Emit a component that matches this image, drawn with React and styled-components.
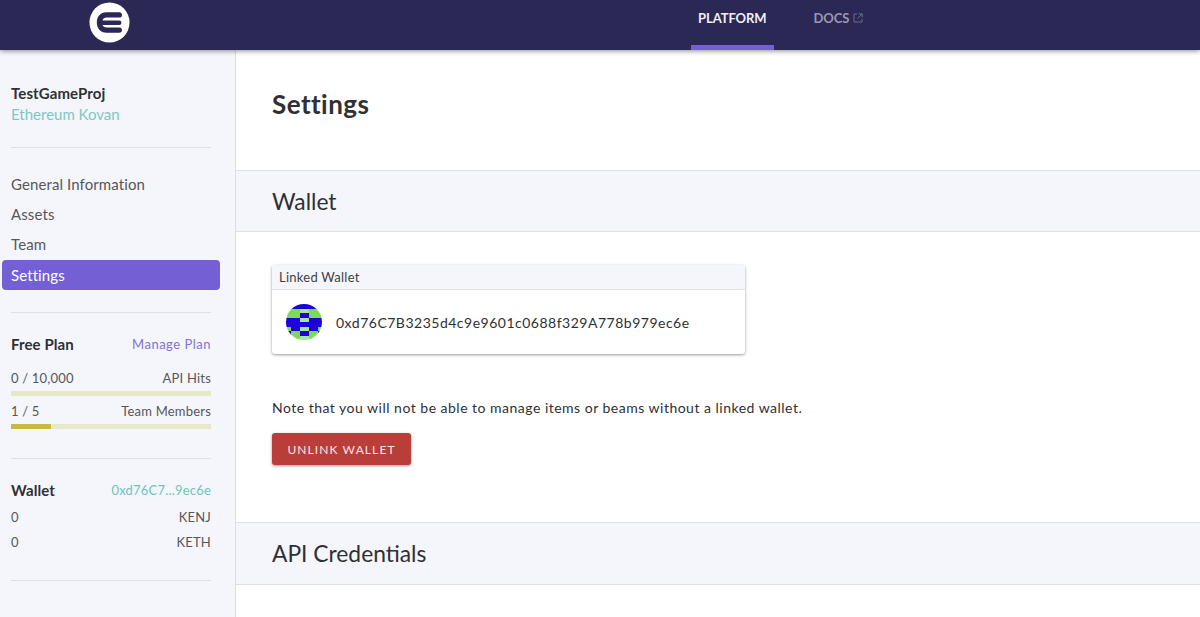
import React from 'react';
import styled, { createGlobalStyle } from 'styled-components';

const GlobalStyle = createGlobalStyle`
  html, body {
    margin: 0;
    padding: 0;
    height: 100%;
    overflow: hidden;
    background: #fff;
    font-family: "Lato", "Open Sans", sans-serif;
    color: #2f3034;
  }
`;

const IDENTICON = [
  'bbbbbbbb',
  'gggllggg',
  'gggbbggg',
  'bbbllbbb',
  'bbbbbbbb',
  'gbbllbbg',
  'bggbbggb',
  'gggllggg',
];
const CELL_COLOR = { b: '#1f00d8', g: '#7ed957', l: '#a4e69a' };

function Identicon() {
  return (
    <svg width="36" height="36" viewBox="0 0 8 8" shapeRendering="crispEdges">
      <defs>
        <clipPath id="round">
          <circle cx="4" cy="4" r="4" />
        </clipPath>
      </defs>
      <g clipPath="url(#round)">
        {IDENTICON.map((row, y) =>
          row.split('').map((c, x) => (
            <rect key={`${x}-${y}`} x={x} y={y} width="1" height="1" fill={CELL_COLOR[c]} />
          ))
        )}
      </g>
    </svg>
  );
}

function Logo() {
  return (
    <svg width="41" height="41" viewBox="0 0 42 42">
      <circle cx="21" cy="21" r="20.5" fill="#fff" />
      <path
        d="M31 10.500H18C11.500 10.500 8 15 8 21s3.500 10.500 10 10.500h13a2.750 2.750 0 0 0 0-5.500H18c-2 0-3.700-.8-4.200-2.500H31a2.250 2.250 0 0 0 0-4.500H13.800c.5-1.700 2.200-3 4.200-3h13a2.750 2.750 0 0 0 0-5.500z"
        fill="#2b2856"
      />
    </svg>
  );
}

function ExternalIcon() {
  return (
    <svg width="10" height="10" viewBox="0 0 10 10" fill="none" stroke="#6d6b8a" strokeWidth="1">
      <path d="M4 1H1v8h8V6M5.500 .8h3.700v3.700M9 1 4.500 5.500" />
    </svg>
  );
}

export default function App() {
  return (
    <>
      <GlobalStyle />
      <Header>
        <LogoSlot>
          <Logo />
        </LogoSlot>
        <Nav>
          <NavItem $active>PLATFORM</NavItem>
          <NavItem>
            DOCS <ExternalIcon />
          </NavItem>
        </Nav>
      </Header>
      <Body>
        <Sidebar>
          <ProjectName>TestGameProj</ProjectName>
          <Network>Ethereum Kovan</Network>
          <Divider $top={22} />
          <Menu>
            <MenuItem>General Information</MenuItem>
            <MenuItem>Assets</MenuItem>
            <MenuItem>Team</MenuItem>
            <MenuItem $active>Settings</MenuItem>
          </Menu>
          <Divider $top={22} />
          <HeadRow>
            <SideTitle>Free Plan</SideTitle>
            <ManageLink>Manage Plan</ManageLink>
          </HeadRow>
          <StatRow $top={15}>
            <span>0 / 10,000</span>
            <span>API Hits</span>
          </StatRow>
          <Bar />
          <StatRow $top={6}>
            <span>1 / 5</span>
            <span>Team Members</span>
          </StatRow>
          <Bar $fill={20} />
          <Divider $top={29} />
          <HeadRow>
            <SideTitle>Wallet</SideTitle>
            <WalletLink>0xd76C7...9ec6e</WalletLink>
          </HeadRow>
          <StatRow $top={8}>
            <span>0</span>
            <span>KENJ</span>
          </StatRow>
          <StatRow $top={7}>
            <span>0</span>
            <span>KETH</span>
          </StatRow>
          <Divider $top={29} />
        </Sidebar>
        <Main>
          <PageTitle>Settings</PageTitle>
          <SectionHead $height={62}>Wallet</SectionHead>
          <SectionBody>
            <Card>
              <CardHead>Linked Wallet</CardHead>
              <CardRow>
                <Identicon />
                <Address>0xd76C7B3235d4c9e9601c0688f329A778b979ec6e</Address>
              </CardRow>
            </Card>
            <Note>Note that you will not be able to manage items or beams without a linked wallet.</Note>
            <UnlinkButton>UNLINK WALLET</UnlinkButton>
          </SectionBody>
          <SectionHead $height={63}>API Credentials</SectionHead>
        </Main>
      </Body>
    </>
  );
}

const Header = styled.header`
  position: relative;
  z-index: 2;
  display: flex;
  height: 50px;
  background: #2b2856;
  box-shadow: 0 1px 5px rgba(0, 0, 0, 0.45);
`;

const LogoSlot = styled.div`
  width: 691px;
  padding: 2px 0 0 89px;
  box-sizing: border-box;
`;

const Nav = styled.nav`
  display: flex;
  gap: 33px;
`;

const NavItem = styled.div`
  display: flex;
  align-items: center;
  gap: 4px;
  box-sizing: border-box;
  height: 50px;
  padding: 0 7px 9px;
  font-size: 13px;
  font-weight: 700;
  letter-spacing: -0.08px;
  color: ${(p) => (p.$active ? '#eeeef4' : '#9a98ae')};
  border-bottom: 5px solid ${(p) => (p.$active ? '#7460d4' : 'transparent')};
`;

const Body = styled.div`
  display: flex;
  height: 567px;
`;

const Sidebar = styled.aside`
  box-sizing: border-box;
  width: 236px;
  flex-shrink: 0;
  padding: 33px 24px 0 11px;
  background: #f5f6fb;
  border-right: 1px solid #dcdde3;
`;

const ProjectName = styled.div`
  font-size: 15px;
  font-weight: 700;
  line-height: 20px;
  letter-spacing: 0.1px;
  color: #2f3034;
`;

const Network = styled.div`
  font-size: 15px;
  line-height: 22px;
  color: #7cc8c4;
`;

const Divider = styled.div`
  height: 1px;
  margin-top: ${(p) => p.$top}px;
  background: #dfe0e6;
`;

const Menu = styled.nav`
  margin: 21px -9px 0;
`;

const MenuItem = styled.div`
  box-sizing: border-box;
  height: 30px;
  margin-top: ${(p) => (p.$active ? 1 : 0)}px;
  padding-left: 9px;
  border-radius: 4px;
  font-size: 15px;
  line-height: 30px;
  letter-spacing: 0.1px;
  color: ${(p) => (p.$active ? '#fff' : '#55565b')};
  background: ${(p) => (p.$active ? '#7460d4' : 'transparent')};
`;

const HeadRow = styled.div`
  display: flex;
  justify-content: space-between;
  align-items: center;
  height: 20px;
  margin-top: 21px;
`;

const SideTitle = styled.div`
  font-size: 15px;
  font-weight: 700;
  letter-spacing: 0.1px;
  color: #2f3034;
`;

const ManageLink = styled.div`
  font-size: 13px;
  letter-spacing: 0.5px;
  color: #8172dc;
`;

const WalletLink = styled.div`
  font-size: 13px;
  letter-spacing: 0.2px;
  color: #6ec4bf;
`;

const StatRow = styled.div`
  display: flex;
  justify-content: space-between;
  height: 18px;
  margin-top: ${(p) => p.$top}px;
  font-size: 13px;
  line-height: 18px;
  letter-spacing: 0.2px;
  color: #55565b;
`;

const Bar = styled.div`
  height: 5px;
  margin-top: 4px;
  background: linear-gradient(
    to right,
    #c9b93f ${(p) => p.$fill || 0}%,
    #e6e8c8 ${(p) => p.$fill || 0}%
  );
`;

const Main = styled.main`
  flex: 1;
  min-width: 0;
`;

const PageTitle = styled.h1`
  margin: 0;
  height: 120px;
  padding: 37px 0 0 36px;
  box-sizing: border-box;
  font-size: 26px;
  font-weight: 700;
  line-height: 34px;
  letter-spacing: 0.45px;
  color: #2f3034;
`;

const SectionHead = styled.h2`
  box-sizing: border-box;
  height: ${(p) => p.$height}px;
  margin: 0;
  padding-left: 36px;
  background: #f5f6fb;
  border-top: 1px solid #dfe0e6;
  border-bottom: 1px solid #dfe0e6;
  font-size: 22.8px;
  font-weight: 400;
  line-height: 60px;
  color: #2f3034;
`;

const SectionBody = styled.section`
  box-sizing: border-box;
  height: 290px;
  padding: 33px 36px 0;
`;

const Card = styled.div`
  width: 473px;
  border-radius: 3px;
  background: #fff;
  box-shadow: 0 1px 3px rgba(0, 0, 0, 0.4);
`;

const CardHead = styled.div`
  box-sizing: border-box;
  height: 25px;
  padding-left: 7px;
  background: #f5f6fb;
  border-bottom: 1px solid #dfe0e6;
  font-size: 13px;
  line-height: 24px;
  letter-spacing: 0.25px;
  color: #3d3e43;
`;

const CardRow = styled.div`
  display: flex;
  align-items: center;
  gap: 14px;
  height: 64px;
  padding-left: 14px;
`;

const Address = styled.span`
  font-size: 14px;
  letter-spacing: 0.5px;
  color: #2f3034;
`;

const Note = styled.p`
  margin: 45px 0 0;
  font-size: 14px;
  line-height: 18px;
  letter-spacing: 0.49px;
  color: #2f3034;
`;

const UnlinkButton = styled.button`
  display: block;
  width: 139px;
  height: 32px;
  margin-top: 16px;
  padding: 0;
  border: 0;
  border-radius: 3px;
  background: #b93e3a;
  box-shadow: 0 1px 3px rgba(0, 0, 0, 0.4);
  font-family: inherit;
  font-size: 12px;
  letter-spacing: 1.1px;
  color: #f6e6e5;
`;
